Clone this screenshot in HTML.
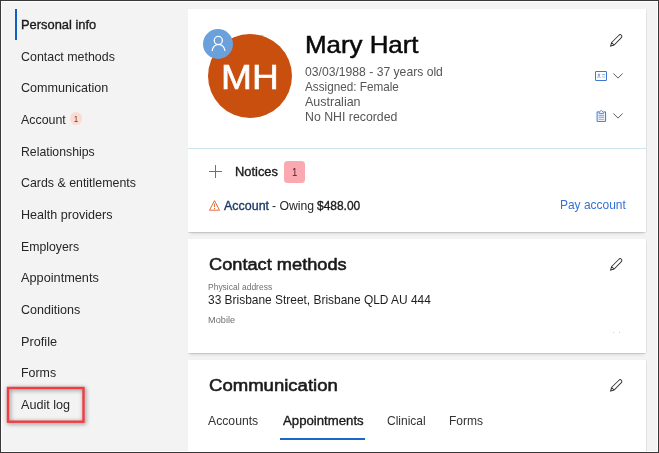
<!DOCTYPE html>
<html><head><meta charset="utf-8">
<style>
*{box-sizing:border-box;margin:0;padding:0}
html,body{width:659px;height:453px;overflow:hidden;background:#f3f3f3;font-family:"Liberation Sans",sans-serif;color:#222}
#frame{position:absolute;left:0;top:0;width:659px;height:453px;border:1px solid #383838;z-index:50;pointer-events:none;box-shadow:inset 0 0 0 1px rgba(255,255,255,.8)}
.abs{position:absolute;white-space:nowrap}
.t{position:absolute;white-space:nowrap;transform-origin:0 50%}
.card{position:absolute;left:188px;width:458px;background:#fff;box-shadow:0 1px 0.5px rgba(0,0,0,.09),0 3.5px 3px -2px rgba(0,0,0,.13),1.2px 0 1px -0.3px rgba(0,0,0,.07)}
svg{position:absolute;overflow:visible;z-index:2}
.abs,.t{z-index:1}
.card{z-index:0}
</style></head><body>
<div id="frame"></div>
<!-- sidebar -->
<div class="abs" style="left:15px;top:9px;width:2px;height:31px;background:#0f5fc5"></div>
<div class="abs" style="left:69.8px;top:112.1px;width:12.3px;height:13.1px;border-radius:50%;background:#fddbd1"></div>
<svg style="left:0;top:380px;filter:drop-shadow(1.7px 1.9px 2px rgba(0,0,0,.5))" width="100" height="50" viewBox="0 0 100 50" fill="none"><rect x="8" y="8" width="75.5" height="33.7" stroke="#f23c43" stroke-width="2.4"/></svg>

<!-- card 1 -->
<div class="card" style="top:9px;height:223px"></div>
<div class="abs" style="left:207.7px;top:34.2px;width:84px;height:84px;border-radius:50%;background:#c94f0f"></div>
<div class="abs" style="left:203px;top:29px;width:30px;height:30px;border-radius:50%;background:#6aa0dc"></div>
<svg style="left:203px;top:29px" width="30" height="30" viewBox="0 0 30 30" fill="none" stroke="#fff" stroke-width="1.25" stroke-linecap="butt"><circle cx="15.3" cy="11.5" r="4.05"/><path d="M9.2 22 A6.3 6.5 0 0 1 21.9 22"/></svg>
<div class="abs" style="left:188px;top:148px;width:458px;height:1px;background:#cbe5ec"></div>

<!-- pencil icons -->
<svg style="left:609.5px;top:33.7px" width="13" height="13" viewBox="0 0 13 13" fill="none" stroke="#333" stroke-width="0.95"><g transform="translate(6.1 6.5) rotate(45)"><path d="M-1.75 4.6 V-5.7 A1.75 1.75 0 0 1 1.75 -5.7 V4.6 L0 7.8 Z M-1.75 4.6 H1.75"/></g></svg>
<svg style="left:609.5px;top:257.5px" width="13" height="13" viewBox="0 0 13 13" fill="none" stroke="#333" stroke-width="0.95"><g transform="translate(6.1 6.5) rotate(45)"><path d="M-1.75 4.6 V-5.7 A1.75 1.75 0 0 1 1.75 -5.7 V4.6 L0 7.8 Z M-1.75 4.6 H1.75"/></g></svg>
<svg style="left:609.5px;top:378.6px" width="13" height="13" viewBox="0 0 13 13" fill="none" stroke="#333" stroke-width="0.95"><g transform="translate(6.1 6.5) rotate(45)"><path d="M-1.75 4.6 V-5.7 A1.75 1.75 0 0 1 1.75 -5.7 V4.6 L0 7.8 Z M-1.75 4.6 H1.75"/></g></svg>

<!-- contact card icon + chevron -->
<svg style="left:595px;top:71px" width="12" height="10" viewBox="0 0 12 10" fill="none" stroke="#4177cf" stroke-width="1"><rect x="0.5" y="0.5" width="11" height="9" rx="0.3"/><circle cx="3.9" cy="3.9" r="0.85" stroke-width="0.7"/><path d="M2.4 6.8 C2.4 5.4 5.4 5.4 5.4 6.8 M7 3.6 H10.2 M7.2 6 H9.8" stroke-width="0.7" opacity="0.85"/></svg>
<svg style="left:613px;top:73px" width="10" height="6" viewBox="0 0 10 6" fill="none" stroke="#4a4a4a" stroke-width="0.9"><path d="M0.3 0.4 L5 5.1 L9.7 0.4"/></svg>
<!-- clipboard icon + chevron -->
<svg style="left:595.5px;top:110px" width="11" height="12" viewBox="0 0 11 12" fill="none" stroke="#4177cf" stroke-width="1"><path d="M3 1.9 H1.1 V11.4 H9.6 V1.9 H7.6"/><path d="M3 3.4 V2.3 L5.3 0.4 L7.6 2.3 V3.4 Z" fill="#fff" stroke-width="0.9" stroke-linejoin="round"/><path d="M2.4 5.3 H8.3 M2.4 7.2 H8.3" stroke-width="0.75"/><path d="M2.4 9.3 H8.3" stroke-width="1.2" opacity="0.55"/></svg>
<svg style="left:613px;top:112.6px" width="10" height="6" viewBox="0 0 10 6" fill="none" stroke="#4a4a4a" stroke-width="0.9"><path d="M0.3 0.4 L5 5.1 L9.7 0.4"/></svg>

<!-- plus -->
<svg style="left:208.5px;top:165px" width="13" height="13" viewBox="0 0 13 13" fill="none" stroke="#2f7fe0" stroke-width="1"><path d="M6.5 0 V13 M0 6.5 H13"/></svg>
<!-- notices badge -->
<div class="abs" style="left:284px;top:161px;width:21px;height:22px;border-radius:3.5px;background:#fba9b0"></div>
<!-- warning triangle -->
<svg style="left:208.7px;top:199.5px" width="11" height="10.8" viewBox="0 0 11 10.5" preserveAspectRatio="none" fill="none" stroke="#d8602a" stroke-width="0.9" stroke-linejoin="round"><path d="M5.5 0.6 L10.5 9.9 H0.5 Z"/><path d="M5.5 3.6 V6.8 M5.5 7.8 V8.8" stroke-width="0.9"/></svg>

<!-- card 2 -->
<div class="card" style="top:239px;height:114px"></div>
<div class="abs" style="left:612.5px;top:332px;width:1.2px;height:1px;background:#f6c58e"></div>
<div class="abs" style="left:619.3px;top:332px;width:1.2px;height:1px;background:#f6c58e"></div>

<!-- card 3 -->
<div class="card" style="top:359.5px;height:100px"></div>
<div class="abs" style="left:280px;top:438px;width:85px;height:2px;background:#1a66c9"></div>

<div class="t" id="n0" style="left:21.10px;top:15.82px;font-size:13.5px;line-height:17px;color:#1a1a1a;transform:scaleX(0.9536);-webkit-text-stroke:0.37px #1a1a1a;">Personal info</div>
<div class="t" id="n1" style="left:21.34px;top:47.82px;font-size:13.5px;line-height:17px;color:#262626;transform:scaleX(0.9201);">Contact methods</div>
<div class="t" id="n2" style="left:21.34px;top:78.82px;font-size:13.5px;line-height:17px;color:#262626;transform:scaleX(0.9313);">Communication</div>
<div class="t" id="n3" style="left:21.08px;top:110.82px;font-size:13.5px;line-height:17px;color:#262626;transform:scaleX(0.9186);">Account</div>
<div class="t" id="n4" style="left:21.27px;top:142.82px;font-size:13.5px;line-height:17px;color:#262626;transform:scaleX(0.9088);">Relationships</div>
<div class="t" id="n5" style="left:21.34px;top:173.82px;font-size:13.5px;line-height:17px;color:#262626;transform:scaleX(0.9170);">Cards &amp; entitlements</div>
<div class="t" id="n6" style="left:21.05px;top:205.82px;font-size:13.5px;line-height:17px;color:#262626;transform:scaleX(0.9306);">Health providers</div>
<div class="t" id="n7" style="left:21.08px;top:237.82px;font-size:13.5px;line-height:17px;color:#262626;transform:scaleX(0.9104);">Employers</div>
<div class="t" id="n8" style="left:21.07px;top:268.82px;font-size:13.5px;line-height:17px;color:#262626;transform:scaleX(0.9429);">Appointments</div>
<div class="t" id="n9" style="left:21.34px;top:300.82px;font-size:13.5px;line-height:17px;color:#262626;transform:scaleX(0.9283);">Conditions</div>
<div class="t" id="n10" style="left:21.07px;top:332.82px;font-size:13.5px;line-height:17px;color:#262626;transform:scaleX(0.9418);">Profile</div>
<div class="t" id="n11" style="left:21.08px;top:363.82px;font-size:13.5px;line-height:17px;color:#262626;transform:scaleX(0.9181);">Forms</div>
<div class="t" id="n12" style="left:21.08px;top:395.82px;font-size:13.5px;line-height:17px;color:#262626;transform:scaleX(0.9332);">Audit log</div>
<div class="t" id="nb" style="left:74.00px;top:114.38px;font-size:8.8px;line-height:11px;color:#4a3038;transform:scaleX(0.8121);">1</div>
<div class="t" id="mh" style="left:220.74px;top:55.85px;font-size:34.5px;line-height:43px;color:#ffffff;transform:scaleX(1.0755);-webkit-text-stroke:0.60px #ffffff;">MH</div>
<div class="t" id="name" style="left:304.64px;top:29.82px;font-size:23.6px;line-height:30px;color:#0a0a0a;transform:scaleX(1.0964);-webkit-text-stroke:0.50px #0a0a0a;">Mary Hart</div>
<div class="t" id="i1" style="left:305.27px;top:62.82px;font-size:13.5px;line-height:17px;color:#555555;transform:scaleX(0.9005);">03/03/1988 - 37 years old</div>
<div class="t" id="i2" style="left:304.67px;top:77.82px;font-size:13.5px;line-height:17px;color:#555555;transform:scaleX(0.8684);">Assigned: Female</div>
<div class="t" id="i3" style="left:304.68px;top:92.82px;font-size:13.5px;line-height:17px;color:#555555;transform:scaleX(0.9256);">Australian</div>
<div class="t" id="i4" style="left:304.87px;top:107.82px;font-size:13.5px;line-height:17px;color:#555555;transform:scaleX(0.9125);">No NHI recorded</div>
<div class="t" id="not" style="left:234.51px;top:162.82px;font-size:13.5px;line-height:17px;color:#1a1a1a;transform:scaleX(0.9531);-webkit-text-stroke:0.37px #1a1a1a;">Notices</div>
<div class="t" id="notb" style="left:292.31px;top:165.86px;font-size:10.5px;line-height:13px;color:#4a1a1e;transform:scaleX(0.9207);">1</div>
<div class="t" id="acc" style="left:223.59px;top:196.82px;font-size:13.5px;line-height:17px;color:#1b3a66;transform:scaleX(0.9232);-webkit-text-stroke:0.37px #1b3a66;">Account</div>
<div class="t" id="ow" style="left:272.00px;top:196.82px;font-size:13.5px;line-height:17px;color:#262626;transform:scaleX(0.9069);">- Owing</div>
<div class="t" id="amt" style="left:317.43px;top:196.82px;font-size:13.5px;line-height:17px;color:#1a1a1a;transform:scaleX(0.8860);-webkit-text-stroke:0.37px #1a1a1a;">$488.00</div>
<div class="t" id="pay" style="left:559.98px;top:195.82px;font-size:13.5px;line-height:17px;color:#3572d4;transform:scaleX(0.8853);">Pay account</div>
<div class="t" id="cm" style="left:208.88px;top:253.04px;font-size:17.2px;line-height:22px;color:#1a1a1a;transform:scaleX(1.0598);-webkit-text-stroke:0.58px #1a1a1a;">Contact methods</div>
<div class="t" id="pa" style="left:208.31px;top:282.20px;font-size:9px;line-height:11px;color:#707070;transform:scaleX(0.9425);">Physical address</div>
<div class="t" id="addr" style="left:208.31px;top:290.82px;font-size:13.5px;line-height:17px;color:#1f1f1f;transform:scaleX(0.8839);">33 Brisbane Street, Brisbane QLD AU 444</div>
<div class="t" id="mob" style="left:208.29px;top:315.02px;font-size:9px;line-height:11px;color:#707070;transform:scaleX(1.0221);">Mobile</div>
<div class="t" id="com" style="left:208.86px;top:374.04px;font-size:17.2px;line-height:22px;color:#1a1a1a;transform:scaleX(1.0785);-webkit-text-stroke:0.58px #1a1a1a;">Communication</div>
<div class="t" id="t1" style="left:208.08px;top:411.82px;font-size:13.5px;line-height:17px;color:#333333;transform:scaleX(0.9038);">Accounts</div>
<div class="t" id="t2" style="left:282.79px;top:411.82px;font-size:13.5px;line-height:17px;color:#1a1a1a;transform:scaleX(0.9778);-webkit-text-stroke:0.37px #1a1a1a;">Appointments</div>
<div class="t" id="t3" style="left:386.84px;top:411.82px;font-size:13.5px;line-height:17px;color:#333333;transform:scaleX(0.8874);">Clinical</div>
<div class="t" id="t4" style="left:448.63px;top:411.82px;font-size:13.5px;line-height:17px;color:#333333;transform:scaleX(0.8914);">Forms</div>
</body></html>
